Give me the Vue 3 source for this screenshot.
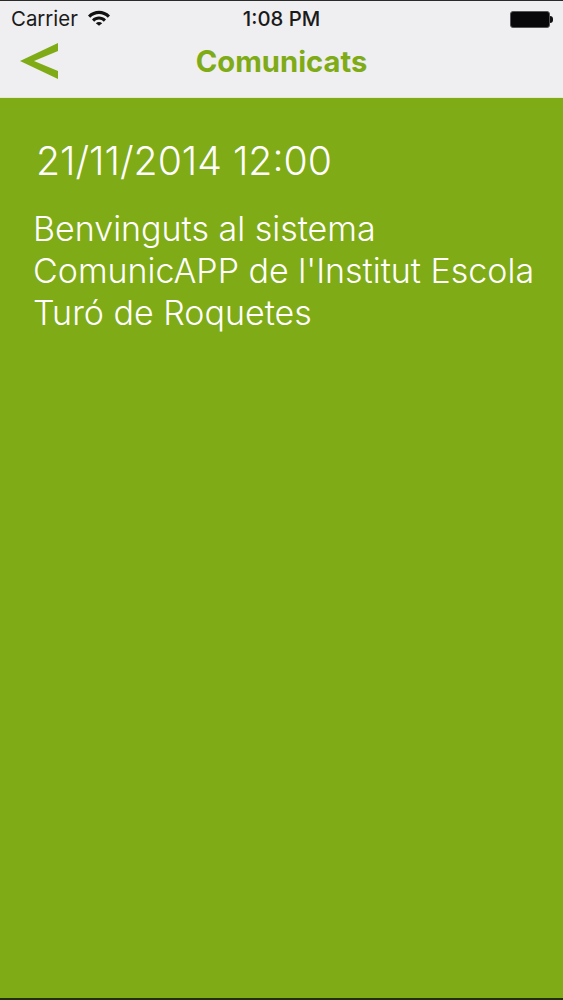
<script setup>
const lines = ['Benvinguts al sistema', "ComunicAPP de l'Institut Escola", 'Turó de Roquetes']
</script>

<template>
  <div class="screen">
    <header class="top">
      <div class="status">
        <div class="status-left">
          <span class="carrier">Carrier</span>
          <svg class="wifi" viewBox="0 0 22 15.5" width="22" height="16">
            <path d="M0 5.2C6.2 -1 15.8 -1 22 5.2L19.8 7.6C14.6 2.6 7.4 2.6 2.2 7.6Z" fill="#111" />
            <path d="M4 9.2C8 5.4 14 5.4 18 9.2L15.8 11.4C13 8.6 9 8.6 6.2 11.4Z" fill="#111" />
            <path d="M7.8 12.9C9.7 11.2 12.3 11.2 14.2 12.9L11 15.5Z" fill="#111" />
          </svg>
        </div>
        <span class="time">1:08 PM</span>
        <div class="battery">
          <span class="battery-body"></span>
          <span class="battery-tip"></span>
        </div>
      </div>
      <div class="nav">
        <svg class="back" viewBox="0 0 38 36" width="38" height="36">
          <polygon points="38,0 38,8 14,18 38,28 38,36 0,18" fill="#7fab16" />
        </svg>
        <span class="title">Comunicats</span>
      </div>
    </header>
    <main class="content">
      <div class="date">21/11/2014 12:00</div>
      <p class="message">
        <span v-for="line in lines" :key="line" class="line">{{ line }}</span>
      </p>
    </main>
  </div>
</template>

<style>
html, body { margin: 0; padding: 0; background: #7fab16; }
</style>

<style scoped>
.screen {
  width: 563px;
  height: 1000px;
  display: flex;
  flex-direction: column;
  font-family: Inter, "Liberation Sans", Arial, sans-serif;
  background: #7fab16;
  overflow: hidden;
  border-top: 1px solid #2a2a2a;
  border-bottom: 2px solid #1f2f0a;
  box-sizing: border-box;
}
.top {
  height: 96px;
  flex: none;
  background: #efeef0;
  border-bottom: 1px solid #e3ecc8;
  box-sizing: content-box;
}
.status {
  height: 36px;
  position: relative;
  display: flex;
  align-items: center;
  justify-content: space-between;
  padding: 0 11px 0 11px;
  color: #1a1a1a;
}
.status-left { display: flex; align-items: center; gap: 10px; }
.carrier { font-size: 20.4px; line-height: 36px; }
.wifi { margin-top: -2px; }
.time {
  position: absolute;
  left: 0;
  right: 0;
  text-align: center;
  font-size: 20.3px;
  font-weight: 500;
  line-height: 36px;
}
.battery { display: flex; align-items: center; margin-right: -1px; }
.battery-body {
  width: 40px;
  height: 17px;
  background: #08080a;
  border-radius: 3px;
  border: 1px solid #55555a;
  box-sizing: border-box;
}
.battery-tip {
  width: 3px;
  height: 7px;
  background: #111;
  border-radius: 0 3px 3px 0;
}
.nav {
  height: 60px;
  position: relative;
  display: flex;
  align-items: center;
  justify-content: center;
}
.back { position: absolute; left: 20px; top: 6px; }
.title {
  font-size: 29.2px;
  font-weight: 700;
  color: #7fab16;
  margin-top: -11px;
}
.content {
  flex: 1;
  color: #fff;
  padding: 40px 24px 0 33px;
}
.date {
  font-size: 39.2px;
  font-weight: 340;
  line-height: 46px;
  margin-left: 3px;
}
.message {
  margin: 24px 0 0;
  font-size: 34px;
  font-weight: 340;
  line-height: 42px;
}
.line { display: block; white-space: nowrap; }
</style>
